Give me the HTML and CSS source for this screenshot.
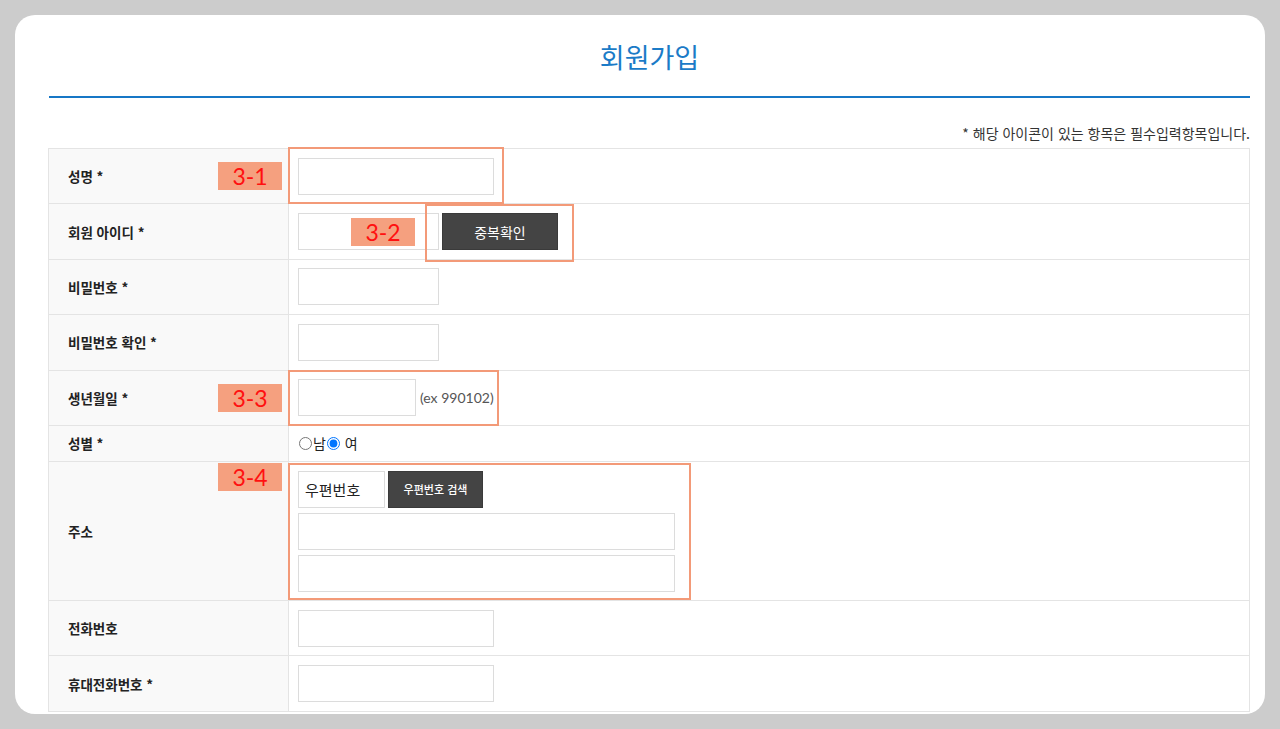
FILE: index.html
```html
<!DOCTYPE html>
<html lang="ko">
<head>
<meta charset="utf-8">
<title>회원가입</title>
<link rel="stylesheet" href="styles.css">
</head>
<body>
<div class="card">
  <h1 class="title">회원가입</h1>
  <p class="note">* 해당 아이콘이 있는 항목은 필수입력항목입니다.</p>
  <div class="form-table">
    <div class="row">
      <div class="th">성명 *<span class="tag">3-1</span></div>
      <div class="td">
        <input class="inp w195" type="text">
        <span class="mark mark-1"></span>
      </div>
    </div>
    <div class="row">
      <div class="th">회원 아이디 *</div>
      <div class="td">
        <input class="inp w141" type="text">
        <button class="btn btn-dup" type="button">중복확인</button>
        <span class="tag tag-2">3-2</span>
        <span class="mark mark-2"></span>
      </div>
    </div>
    <div class="row">
      <div class="th">비밀번호 *</div>
      <div class="td"><input class="inp w141" type="password"></div>
    </div>
    <div class="row">
      <div class="th">비밀번호 확인 *</div>
      <div class="td"><input class="inp w141" type="password"></div>
    </div>
    <div class="row">
      <div class="th">생년월일 *<span class="tag">3-3</span></div>
      <div class="td">
        <input class="inp w117" type="text">
        <span class="hint">(ex 990102)</span>
        <span class="mark mark-3"></span>
      </div>
    </div>
    <div class="row row-short">
      <div class="th">성별 *</div>
      <div class="td gender">
        <label class="radio"><input type="radio" name="sex">남</label>
        <label class="radio"><input type="radio" name="sex" checked>&nbsp;여</label>
      </div>
    </div>
    <div class="row row-tall">
      <div class="th">주소<span class="tag tag-top">3-4</span></div>
      <div class="td addr">
        <div class="zip-line">
          <input class="inp zip" type="text" value="우편번호">
          <button class="btn btn-zip" type="button">우편번호 검색</button>
        </div>
        <input class="inp w376" type="text">
        <input class="inp w376" type="text">
        <span class="mark mark-4"></span>
      </div>
    </div>
    <div class="row">
      <div class="th">전화번호</div>
      <div class="td"><input class="inp w195" type="text"></div>
    </div>
    <div class="row">
      <div class="th">휴대전화번호 *</div>
      <div class="td"><input class="inp w195" type="text"></div>
    </div>
  </div>
</div>
</body>
</html>
```

FILE: styles.css
```css
* { box-sizing: border-box; }

html, body {
  margin: 0;
  padding: 0;
  background: #cccccc;
}

body {
  padding: 15px 15px 0 15px;
  font-family: "Noto Sans CJK KR", "Noto Sans", sans-serif;
  color: #222;
}

.card {
  background: #fff;
  border-radius: 20px;
  height: 699px;
  overflow: hidden;
  padding: 0 15px 0 33px;
}

.title {
  margin: 0 0 0 1px;
  padding: 22px 0 19px;
  line-height: 40px;
  font-size: 27px;
  font-weight: 400;
  color: #1b7bc7;
  text-align: center;
  border-bottom: 2px solid #1677c6;
}

.note {
  margin: 25px 0 5px;
  line-height: 20px;
  font-size: 14px;
  color: #333;
  text-align: right;
}

.form-table {
  border: 1px solid #e4e4e4;
  border-bottom: none;
}

.row {
  display: grid;
  grid-template-columns: 240px 1fr;
  height: 55.4px;
  border-bottom: 1px solid #e4e4e4;
}

.row-short { height: 36px; }
.row-tall { height: 139px; }

.th {
  position: relative;
  background: #f9f9f9;
  border-right: 1px solid #e4e4e4;
  display: flex;
  align-items: center;
  padding-left: 19px;
  font-size: 13.5px;
  font-weight: 700;
  color: #222;
}

.td {
  position: relative;
  display: flex;
  align-items: center;
  padding-left: 9px;
}

.inp {
  height: 37px;
  border: 1px solid #dcdcdc;
  background: #fff;
  padding: 0 6px;
  font-family: "Noto Sans CJK KR", sans-serif;
  font-size: 15px;
  color: #222;
  outline: none;
  margin: 0;
}

.w195 { width: 196px; }
.w141 { width: 141px; }
.w117 { width: 118px; }
.w376 { width: 377px; }

.btn {
  height: 37px;
  border: 1px solid #3a3a3a;
  background: #444;
  color: #fff;
  font-family: "Noto Sans CJK KR", sans-serif;
  margin: 0;
  padding: 0;
  cursor: pointer;
}

.btn-dup {
  width: 116px;
  margin-left: 3px;
  font-size: 14px;
}

.hint {
  margin-left: 4px;
  font-family: Lato, "Open Sans", sans-serif;
  font-size: 14px;
  font-weight: 400;
  color: #555;
}

.gender {
  font-size: 14px;
  color: #222;
}

.radio {
  display: inline-flex;
  align-items: center;
}

.radio input {
  width: 13px;
  height: 13px;
  margin: 0 1px 0 1px;
}

.addr {
  flex-direction: column;
  align-items: flex-start;
  justify-content: flex-start;
  padding-top: 9px;
  gap: 5px;
}

.zip-line {
  display: flex;
  gap: 3px;
}

.zip { width: 87px; }

.btn-zip {
  width: 95px;
  font-size: 11px;
  font-weight: 500;
}

/* annotations */
.tag {
  position: absolute;
  right: 6px;
  top: 50%;
  transform: translateY(-50%);
  width: 64px;
  height: 28px;
  background: #f5a07f;
  color: #ff1010;
  font-family: Lato, "Open Sans", sans-serif;
  font-size: 23px;
  font-weight: 400;
  line-height: 28px;
  text-align: center;
}

.tag-top {
  top: 1px;
  transform: none;
}

.tag-2 {
  right: auto;
  left: 62px;
  top: 50%;
}

.mark {
  position: absolute;
  border: 2px solid #f39a78;
  pointer-events: none;
}

.mark-1 { left: -1px; top: -2px; width: 216px; height: 57px; }
.mark-2 { left: 136px; top: 0; width: 149px; height: 58px; }
.mark-3 { left: -1px; top: -1px; width: 211px; height: 56px; }
.mark-4 { left: -1px; top: 1px; width: 403px; height: 137px; }
```
